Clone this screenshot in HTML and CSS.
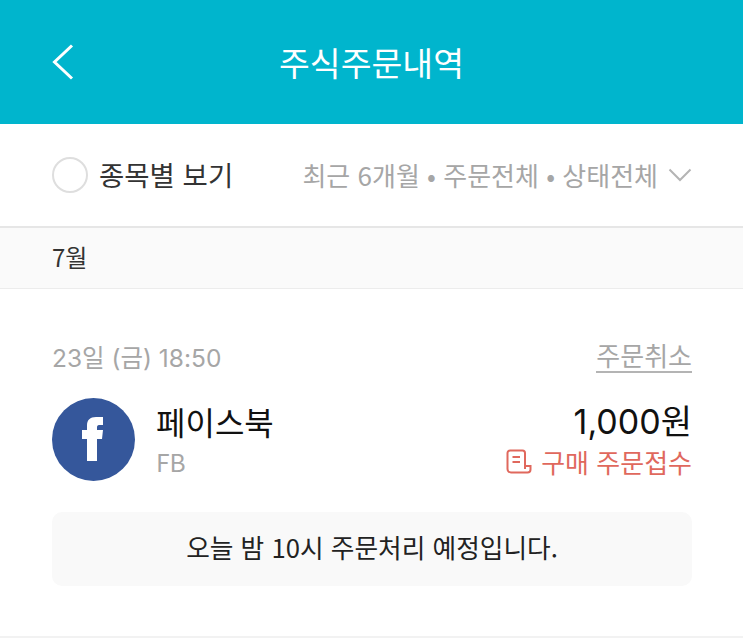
FILE: index.html
```html
<!DOCTYPE html>
<html lang="ko">
<head>
<meta charset="utf-8">
<title>주식주문내역</title>
<link rel="stylesheet" href="styles.css">
</head>
<body>
<header class="topbar">
  <svg class="back" width="24" height="38" viewBox="0 0 24 38"><path d="M21 2.500 L3.500 19 L21 35.500" fill="none" stroke="#fff" stroke-width="3"/></svg>
  <h1 class="title">주식주문내역</h1>
</header>
<section class="filter">
  <div class="toggle"><span class="radio"></span><span class="toggle-label">종목별 보기</span></div>
  <div class="filter-right">
    <span class="filter-text">최근 6개월 • 주문전체 • 상태전체</span>
    <svg width="24" height="14" viewBox="0 0 24 14"><path d="M1.500 1.500 L12 12 L22.500 1.500" fill="none" stroke="#b4b4b4" stroke-width="2"/></svg>
  </div>
</section>
<div class="month">7월</div>
<article class="order">
  <div class="order-top">
    <span class="date">23일 (금) 18:50</span>
    <span class="cancel">주문취소</span>
  </div>
  <div class="order-main">
    <svg class="logo" width="83" height="83" viewBox="0 0 83 83"><circle cx="41.500" cy="41.500" r="41.500" fill="#35579b"/><path d="M35 63 V41 H30 V32 H35 V27 C35 22 38 19 44 19 H51 V27 H47 C45.500 27 45 28 45 29.500 V32 H51 L50 41 H45 V63 Z" fill="#fff"/></svg>
    <div class="stock">
      <div class="stock-name">페이스북</div>
      <div class="stock-code">FB</div>
    </div>
    <div class="amount">
      <div class="price">1,000원</div>
      <div class="status">
        <svg width="26" height="26" viewBox="0 0 26 26" fill="none" stroke="#e0685d" stroke-width="2"><path d="M19 20 V4 A2.500 2.500 0 0 0 16.500 1.500 H4 A2.500 2.500 0 0 0 1.500 4 V20 A3.500 3.500 0 0 0 5 23.500 H21.500 A3 3 0 0 0 24.500 20.500 V17 H19"/><path d="M6.500 8 H14 M6.500 13 H14"/></svg>
        <span>구매 주문접수</span>
      </div>
    </div>
  </div>
  <div class="notice">오늘 밤 10시 주문처리 예정입니다.</div>
</article>
</body>
</html>
```
FILE: styles.css
```css
* { box-sizing: border-box; margin: 0; padding: 0; }
html, body { width: 743px; height: 641px; overflow: hidden; }
body { background: #fff; font-family: "Noto Sans CJK KR", "Noto Sans", sans-serif; color: #111; }
.topbar { position: relative; height: 124px; background: #00b5cd; display: flex; align-items: center; justify-content: center; }
.back { position: absolute; left: 51px; top: 43px; }
.title { font-size: 33.500px; font-weight: 400; color: #fff; line-height: 1; }
.filter { height: 104px; padding: 0 51px 0 52px; display: flex; align-items: center; justify-content: space-between; border-bottom: 2px solid #e6e6e6; }
.toggle { display: flex; align-items: center; gap: 11px; }
.radio { width: 36px; height: 36px; border: 2px solid #dedede; border-radius: 50%; }
.toggle-label { font-size: 27.500px; color: #333; line-height: 1; }
.filter-right { display: flex; align-items: center; gap: 10px; }
.filter-text { font-size: 26px; color: #a6a6a6; line-height: 1; }
.month { height: 61px; padding: 0 0 3px 52px; display: flex; align-items: center; background: #fafafa; border-bottom: 1px solid #ececec; font-size: 24px; color: #333; }
.order { height: 349px; padding: 49px 51px 0 52px; border-bottom: 2px solid #f2f2f2; }
.order-top { display: flex; justify-content: space-between; align-items: center; height: 38px; }
.date { font-family: "Inter", "Noto Sans CJK KR", sans-serif; font-size: 24.500px; color: #a6a6a6; line-height: 1; padding-top: 2px; }
.cancel { font-size: 26px; color: #a6a6a6; line-height: 1; padding-bottom: 3px; border-bottom: 2px solid #b4b4b4; }
.order-main { display: flex; align-items: center; margin-top: 22px; }
.logo { flex: none; }
.stock { margin-left: 21px; flex: 1; margin-top: -1px; }
.stock-name { font-size: 32px; line-height: 40px; color: #111; }
.stock-code { font-size: 24.500px; line-height: 32px; margin-top: 5px; color: #a6a6a6; }
.amount { display: flex; flex-direction: column; align-items: flex-end; }
.price { font-family: "Inter", "Noto Sans CJK KR", sans-serif; font-size: 34px; line-height: 41px; color: #111; }
.status { display: flex; align-items: center; gap: 9px; margin-top: 4px; font-size: 26px; line-height: 32px; color: #e0685d; }
.notice { margin-top: 31px; height: 74px; padding-bottom: 5px; border-radius: 10px; background: #f9f9f9; display: flex; align-items: center; justify-content: center; font-size: 25.700px; color: #222; }
```
